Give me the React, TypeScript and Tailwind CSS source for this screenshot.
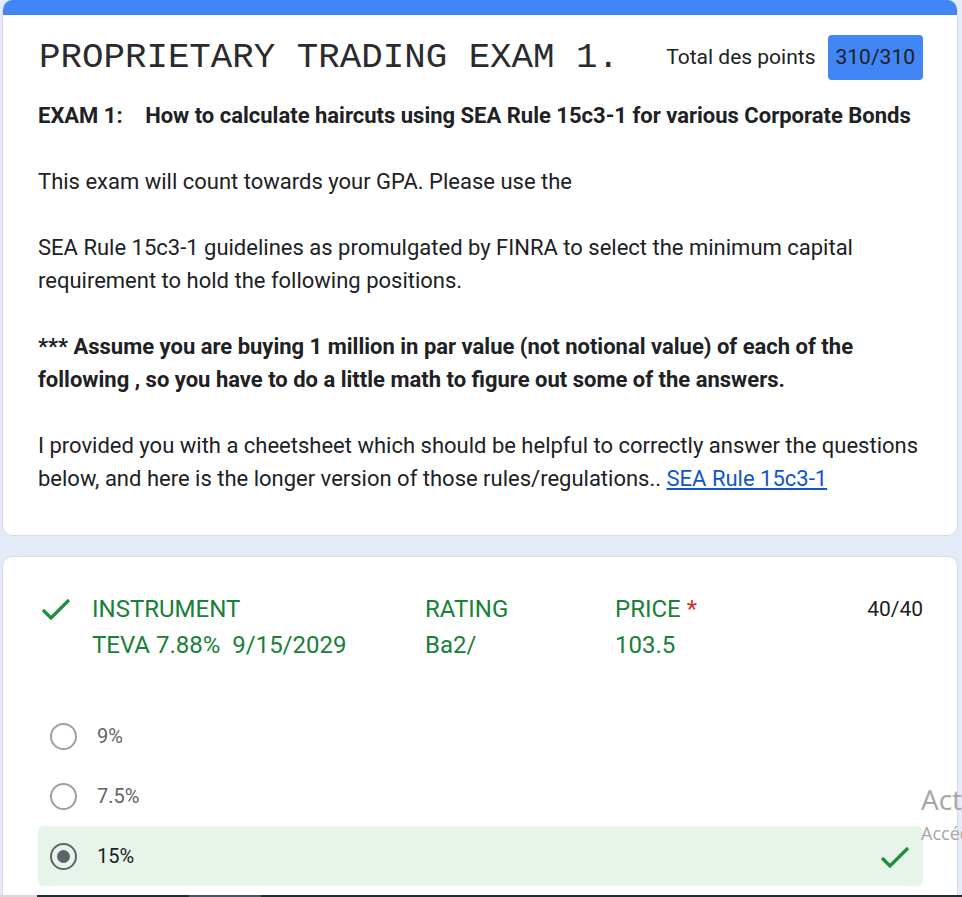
import React from 'react';

const Check: React.FC<{ className?: string }> = ({ className }) => (
  <svg viewBox="0 0 32 24" width="32" height="24" className={className}>
    <polyline points="3,14 11,22 29,4" fill="none" stroke="#1e8e3e" strokeWidth="3.2" />
  </svg>
);

const options = [
  { label: '9%', selected: false },
  { label: '7.5%', selected: false },
  { label: '15%', selected: true },
];

const App: React.FC = () => {
  return (
    <div className="relative h-[897px] w-full overflow-hidden bg-[#e4ebf9] flex flex-col font-['Roboto',sans-serif] text-[#202124]">
      <div className="flex-1 min-h-0 overflow-hidden pl-[2px] pr-[4px] flex flex-col gap-[20px]">
        {/* header card */}
        <div className="shrink-0 rounded-[10px] bg-white border-x border-b border-[#dadce0] overflow-hidden">
          <div className="h-[15px] bg-[#4285f4]" />
          <div className="pl-[35px] pr-[34px] pt-[20px] pb-[40px]">
            <div className="flex items-center h-[45px]">
              <h1 className="font-['Courier_New','Liberation_Mono',monospace] text-[35.8px] leading-none ml-[1px] text-[#2a2b2e]">
                PROPRIETARY TRADING EXAM 1.
              </h1>
              <div className="ml-auto flex items-center">
                <span className="text-[21px]">Total des points</span>
                <span className="ml-[12px] h-[45px] px-[8px] flex items-center rounded-[4px] bg-[#4285f4] text-[21px]">
                  310/310
                </span>
              </div>
            </div>
            <div className="mt-[19px] text-[22px] leading-[33px]">
              <p className="font-bold">
                EXAM 1: <span className="ml-[17px]">How to calculate haircuts using SEA Rule 15c3-1 for various Corporate Bonds</span>
              </p>
              <div className="h-[33px]" />
              <p>This exam will count towards your GPA. Please use the</p>
              <div className="h-[33px]" />
              <p>
                SEA Rule 15c3-1 guidelines as promulgated by FINRA to select the minimum capital
                <br />
                requirement to hold the following positions.
              </p>
              <div className="h-[33px]" />
              <p className="font-bold">
                *** Assume you are buying 1 million in par value (not notional value) of each of the
                <br />
                following , so you have to do a little math to figure out some of the answers.
              </p>
              <div className="h-[33px]" />
              <p>
                I provided you with a cheetsheet which should be helpful to correctly answer the questions
                <br />
                below, and here is the longer version of those rules/regulations..{' '}
                <a href="#" className="text-[#1155cc] underline">SEA Rule 15c3-1</a>
              </p>
            </div>
          </div>
        </div>

        {/* question card */}
        <div className="shrink-0 rounded-[10px] bg-white border border-[#dadce0] pl-[35px] pr-[34px] pt-[34px] pb-[24px]">
          <div className="flex">
            <div className="w-[54px] shrink-0">
              <Check className="ml-[2px] mt-[5px]" />
            </div>
            <div className="flex-1 grid grid-cols-[333px_190px_1fr] text-[24px] leading-[36px] text-[#188038]">
              <div>INSTRUMENT</div>
              <div>RATING</div>
              <div>
                PRICE<span className="ml-[6px] text-[#d93025]">*</span>
              </div>
              <div>TEVA 7.88%&nbsp;&nbsp;9/15/2029</div>
              <div>Ba2/</div>
              <div>103.5</div>
            </div>
            <div className="text-[21px] leading-[36px] text-[#202124]">40/40</div>
          </div>

          <div className="mt-[43px] flex flex-col">
            {options.map((o) => (
              <div
                key={o.label}
                className={`flex items-center h-[60px] rounded-[6px] ${o.selected ? 'bg-[#e6f4ea]' : ''}`}
              >
                <span
                  className={`ml-[12px] w-[27px] h-[27px] rounded-full border-[2.5px] flex items-center justify-center ${
                    o.selected ? 'border-[#5f6368]' : 'border-[#9aa0a6]'
                  }`}
                >
                  {o.selected && <span className="w-[13px] h-[13px] rounded-full bg-[#5f6368]" />}
                </span>
                <span className={`ml-[20px] text-[20px] ${o.selected ? 'text-[#202124]' : 'text-[#5f6368]'}`}>
                  {o.label}
                </span>
                {o.selected && <Check className="ml-auto mr-[12px]" />}
              </div>
            ))}
          </div>
        </div>
      </div>

      {/* taskbar edge */}
      <div className="h-[2px] shrink-0 flex">
        <div className="w-[37px] bg-[#d9d9d9]" />
        <div className="w-[152px] bg-[#1f2a33]" />
        <div className="w-[72px] bg-[#4b5661]" />
        <div className="flex-1 bg-[#1f2a33]" />
      </div>

      {/* windows activation watermark, runs off the right edge of the screen */}
      <div className="absolute left-[921px] top-[781px] whitespace-nowrap font-['Open_Sans',sans-serif] text-[#a6a6a6] pointer-events-none">
        <div className="text-[28px] leading-[36px]">Activer Windows</div>
        <div className="text-[18px] leading-[24px] mt-[4px]">Accédez aux paramètres pour activer Windows.</div>
      </div>
    </div>
  );
};

export default App;
